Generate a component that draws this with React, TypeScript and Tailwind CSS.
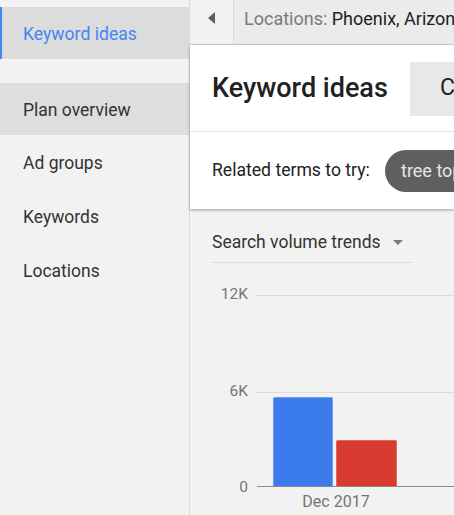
import React from "react";

export default function App() {
  const navItems = ["Ad groups", "Keywords", "Locations"];
  return (
    <div
      className="w-[454px] h-[515px] overflow-hidden flex bg-[#f2f2f2]"
      style={{ fontFamily: "Roboto, 'Liberation Sans', sans-serif" }}
    >
      {/* Sidebar */}
      <aside className="w-[190px] shrink-0 border-r border-[#dcdcdc] bg-[#f2f2f2] pt-[7px] flex flex-col">
        <div className="h-[52px] bg-[#dcdcdc] border-l-2 border-[#4285f4] pl-[21px] pt-[3px] flex items-center text-[17.6px] text-[#4285f4]">
          Keyword ideas
        </div>
        <div className="mt-[24px] h-[52px] bg-[#dedede] pl-[23px] pt-[2px] flex items-center text-[17.5px] text-[#333333]">
          Plan overview
        </div>
        {navItems.map((n) => (
          <div key={n} className="h-[54px] pl-[23px] pt-[3px] flex items-center text-[17.5px] text-[#333333]">
            {n}
          </div>
        ))}
      </aside>

      {/* Main */}
      <main className="flex-1 min-w-0 flex flex-col">
        {/* Top bar */}
        <div className="h-[45px] shrink-0 flex border-b border-[#d4d4d4]">
          <div className="w-[44px] shrink-0 bg-[#f2f2f2] border-r border-[#d8d8d8] flex items-center justify-center pb-[8px]">
            <svg width="7" height="12" viewBox="0 0 7 12">
              <path d="M7 0 L0 6 L7 12 Z" fill="#5f5f5f" />
            </svg>
          </div>
          <div className="flex-1 bg-[#ebebeb] pl-[10px] flex items-center pb-[8px] whitespace-nowrap overflow-hidden text-[18px]">
            <span className="text-[#7a7a7a]">Locations:&nbsp;</span>
            <span className="text-[#212121]">Phoenix, Arizona</span>
          </div>
        </div>

        {/* White panel */}
        <div className="bg-white shrink-0 shadow-[0_1px_3px_rgba(0,0,0,0.35)] relative z-10">
          <div className="h-[87px] flex items-center pl-[22px] pt-[1px] border-b border-[#e4e4e4] whitespace-nowrap overflow-hidden">
            <div className="w-[198px] shrink-0 text-[27px] font-medium text-[#212121]">Keyword ideas</div>
            <div className="h-[54px] shrink-0 bg-[#e8e8e8] pl-[30px] pr-[30px] flex items-center text-[23px] text-[#212121]">
              Create
            </div>
          </div>
          <div className="h-[77px] flex items-center pl-[22px] whitespace-nowrap overflow-hidden">
            <div className="w-[173px] shrink-0 text-[17.6px] text-[#212121]">Related terms to try:</div>
            <div className="h-[42px] shrink-0 rounded-full bg-[#5f5f5f] pl-[16px] pr-[16px] flex items-center text-[18px] text-[#e6e6e6]">
              tree topping
            </div>
          </div>
        </div>

        {/* Search volume trends */}
        <div className="ml-[22px] mt-[14px] w-[200px] h-[40px] border-b border-[#dcdcdc] flex items-center">
          <span className="text-[17.5px] text-[#333333]">Search volume trends</span>
          <svg className="ml-[12px]" width="10" height="5" viewBox="0 0 10 5">
            <path d="M0 0 L10 0 L5 5 Z" fill="#7a7a7a" />
          </svg>
        </div>

        {/* Chart */}
        <div className="mt-[32px] flex">
          <div className="w-[66px] shrink-0 relative h-[192px] text-[15.5px] text-[#757575]">
            <span className="absolute right-[8px] top-0 -translate-y-1/2 leading-none">12K</span>
            <span className="absolute right-[8px] top-[97px] -translate-y-1/2 leading-none">6K</span>
            <span className="absolute right-[8px] bottom-0 translate-y-1/2 leading-none">0</span>
          </div>
          <div className="flex-1 relative h-[192px]">
            <div className="absolute left-0 right-0 top-0 border-t border-[#dcdcdc]" />
            <div className="absolute left-0 right-0 top-[97px] border-t border-[#dcdcdc]" />
            <div className="absolute left-[17px] bottom-0 w-[60px] h-[90px] bg-[#3b7bec] rounded-t-[2px] border border-[#6a9cf0] border-b-0" />
            <div className="absolute left-[80px] bottom-0 w-[61px] h-[47px] bg-[#d83c30] rounded-t-[2px] border border-[#e06a60] border-b-0" />
            <div className="absolute left-[1px] right-0 bottom-0 border-t border-[#8a8a8a]" />
            <span className="absolute left-[80px] top-[199px] -translate-x-1/2 text-[16px] text-[#757575] whitespace-nowrap leading-none">
              Dec 2017
            </span>
          </div>
        </div>
      </main>
    </div>
  );
}
